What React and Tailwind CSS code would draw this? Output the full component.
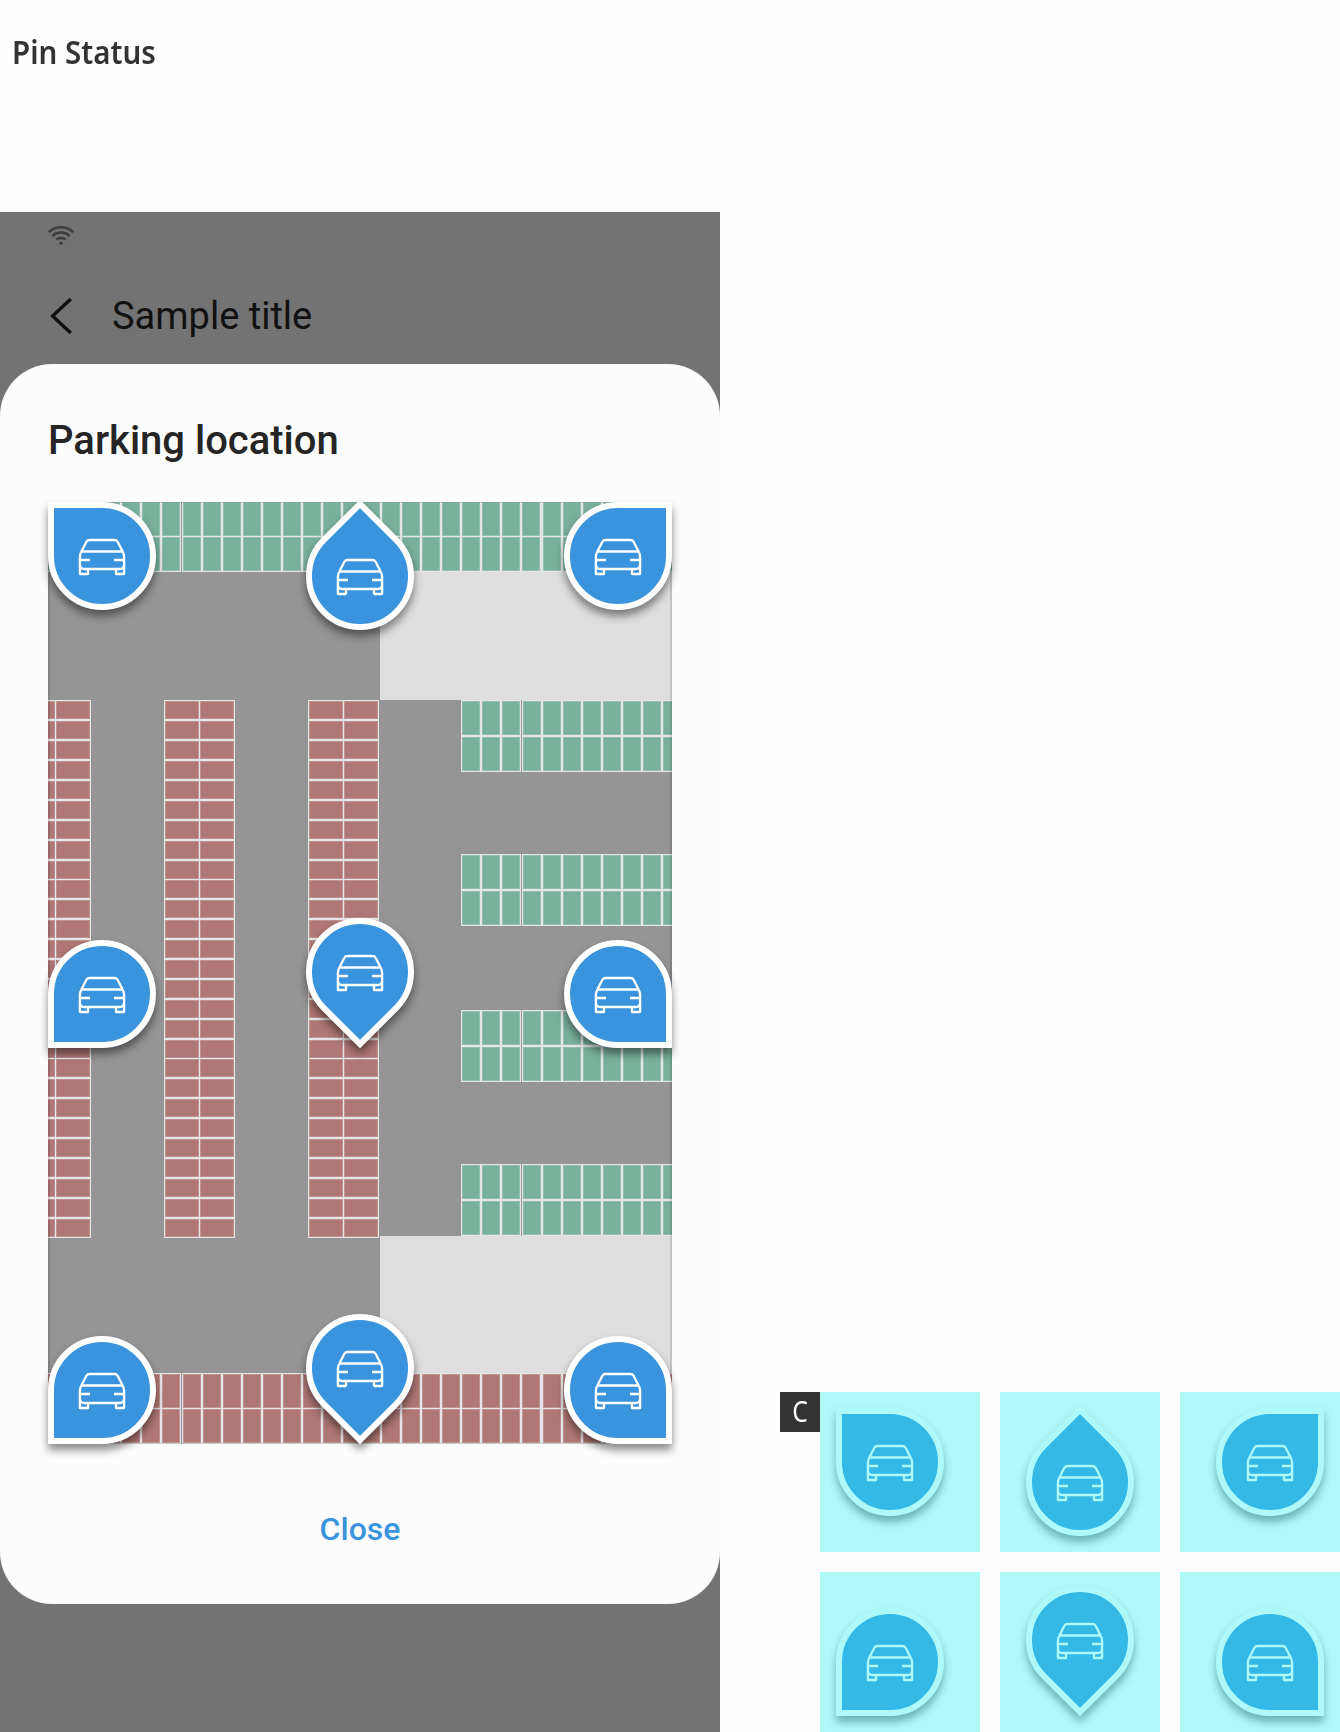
import React from "react";

const range = (start, end, step = 20) => {
  const out = [];
  for (let v = start; v < end; v += step) out.push(v);
  return out;
};

const TONES = {
  green: { fill: "#79b09b", edge: "#92bfae" },
  red: { fill: "#af7775", edge: "#bf9391" },
};

function Bay({ x, y, w, h, tone }) {
  const t = TONES[tone];
  return (
    <g>
      <rect x={x} y={y} width={w} height={h} fill="#e6e6e6" />
      <rect x={x + 1} y={y + 1} width={w - 2} height={h - 2} fill={t.edge} />
      <rect x={x + 2} y={y + 2} width={w - 4} height={h - 4} fill={t.fill} />
    </g>
  );
}

function Bays({ xs, ys, w, h, tone }) {
  return ys.map((y) => xs.map((x) => <Bay key={`${x}-${y}`} x={x} y={y} w={w} h={h} tone={tone} />));
}

// Horizontal positions of the full-width rows at the top and bottom of the lot
const ROW_XS = [
  ...range(41, 181),
  ...range(182, 362),
  ...range(361, 541),
  ...range(542, 672),
];
const SIDE_XS = [461, 481, 501, ...range(522, 672)];
const COLUMN_YS = [...range(700, 879), ...range(879, 1058), ...range(1058, 1238)];

function ParkingMap() {
  return (
    <svg className="block h-[942px] w-[624px]" viewBox="48 502 624 942" shapeRendering="crispEdges">
      <rect x="48" y="502" width="624" height="942" fill="#959595" />
      <rect x="380" y="572" width="292" height="128" fill="#dedede" />
      <rect x="380" y="1236" width="292" height="138" fill="#dedede" />
      <Bays xs={ROW_XS} ys={[536]} w={20} h={36} tone="green" />
      <Bays xs={ROW_XS} ys={[501]} w={20} h={36} tone="green" />
      {[700, 854, 1010, 1164].map((y) => (
        <Bays key={y} xs={SIDE_XS} ys={[y, y + 36]} w={20} h={36} tone="green" />
      ))}
      {[20, 164, 308].map((x) => (
        <Bays key={x} xs={[x, x + 35]} ys={COLUMN_YS} w={36} h={20} tone="red" />
      ))}
      <Bays xs={ROW_XS} ys={[1373, 1408]} w={20} h={36} tone="red" />
      <path d="M541 502h1v70h-1zM541 1373h1v71h-1z" fill="#e0e0e0" />
      <path d="M48 502H672V1444H48ZM50 503V1443H670V503Z" fillRule="evenodd" fill="#000" fillOpacity="0.12" />
    </svg>
  );
}

function Car() {
  return (
    <svg
      className="absolute inset-0 size-[108px]"
      viewBox="-54 -54 108 108"
      fill="none"
      stroke="#fff"
      strokeWidth="2.3"
      strokeLinejoin="round"
    >
      <path d="M-20.6 -4.5L-15.6 -14.2Q-14.6 -16 -12.4 -16H12.4Q14.6 -16 15.6 -14.2L20.6 -4.5Q22.1 -2 22.1 1V8.5Q22.1 13 17.6 13H-17.6Q-22.1 13 -22.1 8.5V1Q-22.1 -2 -20.6 -4.5Z" />
      <path d="M-20.4 -4.5H20.4M-22 4H-12M22 4H12" />
      <path d="M-22.1 9V18H-14V13M22.1 9V18H14V13" />
    </svg>
  );
}

const CORNERS = {
  topLeft: "rounded-full rounded-tl-none",
  topRight: "rounded-full rounded-tr-none",
  bottomLeft: "rounded-full rounded-bl-none",
  bottomRight: "rounded-full rounded-br-none",
  up: "rounded-full rounded-tl-none rotate-45",
  down: "rounded-full rounded-br-none rotate-45",
};

function Pin({ tip, place }) {
  return (
    <div className={`absolute size-[108px] drop-shadow-[0_6px_4px_rgba(0,0,0,0.45)] ${place}`}>
      <div className={`size-[108px] border-6 border-white bg-[#3994dd] ${CORNERS[tip]}`} />
      <Car />
    </div>
  );
}

const MAP_PINS = [
  { tip: "topLeft", place: "left-0 top-0" },
  { tip: "up", place: "left-[258px] top-[20px]" },
  { tip: "topRight", place: "right-0 top-0" },
  { tip: "bottomLeft", place: "left-0 top-[438px]" },
  { tip: "down", place: "left-[258px] top-[416px]" },
  { tip: "bottomRight", place: "right-0 top-[438px]" },
  { tip: "bottomLeft", place: "left-0 top-[834px]" },
  { tip: "down", place: "left-[258px] top-[812px]" },
  { tip: "bottomRight", place: "right-0 top-[834px]" },
];

const TILES = [
  { tip: "topLeft", place: "left-[16px] top-[16px]" },
  { tip: "up", place: "left-[26px] top-[36px]" },
  { tip: "topRight", place: "left-[36px] top-[16px]" },
  { tip: "bottomLeft", place: "left-[16px] top-[36px]" },
  { tip: "down", place: "left-[26px] top-[14px]" },
  { tip: "bottomRight", place: "left-[36px] top-[36px]" },
];

function Phone() {
  return (
    <section className="flex h-[1520px] w-[720px] flex-col bg-[#737373] font-['Roboto',sans-serif]">
      <div className="h-[152px]">
        <svg className="ml-[48px] mt-[13px] h-[22px] w-[26px]" viewBox="48 225 26 22" fill="none" stroke="#3d3d3d" strokeWidth="2.5">
          <path d="M48.8 232Q54 227.2 61 227.2T73.2 232" />
          <path d="M52.4 236Q56 232.6 61 232.6T69.6 236" />
          <path d="M56.2 239.7Q58 238 61 238T65.8 239.7" />
          <circle cx="61" cy="243.3" r="1.8" fill="#3d3d3d" stroke="none" />
        </svg>
        <div className="mt-[45px] flex h-[48px] items-center">
          <svg className="ml-[48px] h-[40px] w-[26px]" viewBox="48 296 26 40" fill="none" stroke="#111" strokeWidth="3.4">
            <path d="M70.8 299L52.6 316L70.8 333" />
          </svg>
          <h2 className="ml-[38px] text-[38px] leading-[48px] text-[#111]">Sample title</h2>
        </div>
      </div>
      <div className="flex h-[1240px] flex-col rounded-[52px] bg-[#fcfcfc] px-12">
        <h3 className="mt-[53px] h-[48px] text-[40px] font-medium leading-[48px] text-[#252525]">Parking location</h3>
        <div className="relative mt-[37px] h-[942px] w-[624px]">
          <ParkingMap />
          {MAP_PINS.map((p) => (
            <Pin key={p.tip + p.place} {...p} />
          ))}
        </div>
        <button className="mt-[65px] h-[40px] self-center text-[32px] font-medium leading-[40px] text-[#3994dd]">Close</button>
      </div>
    </section>
  );
}

function Tile({ tip, place }) {
  return (
    <div className="relative size-[160px] overflow-hidden bg-white">
      <Pin tip={tip} place={place} />
      <div className="absolute inset-0 bg-[rgba(45,242,245,0.385)]" />
    </div>
  );
}

export default function App() {
  return (
    <main className="h-[1732px] w-[1340px] overflow-hidden bg-[#fefefe]">
      <h1 className="ml-3 h-[212px] w-[200px] origin-left scale-x-[0.922] pt-[32px] font-['Noto_Sans',sans-serif] text-[32px] font-semibold leading-[40px] text-[#333]">
        Pin Status
      </h1>
      <div className="flex">
        <Phone />
        <div className="ml-[60px] mt-[1180px] flex h-[340px]">
          <span className="flex size-[40px] items-center justify-center bg-[#333] font-['Noto_Sans',sans-serif] text-[29px] leading-none text-white">
            <span className="-mt-[3px] scale-x-[0.85]">C</span>
          </span>
          <div className="grid grid-cols-[160px_160px_160px] gap-5">
            {TILES.map((t) => (
              <Tile key={t.tip} {...t} />
            ))}
          </div>
        </div>
      </div>
    </main>
  );
}
